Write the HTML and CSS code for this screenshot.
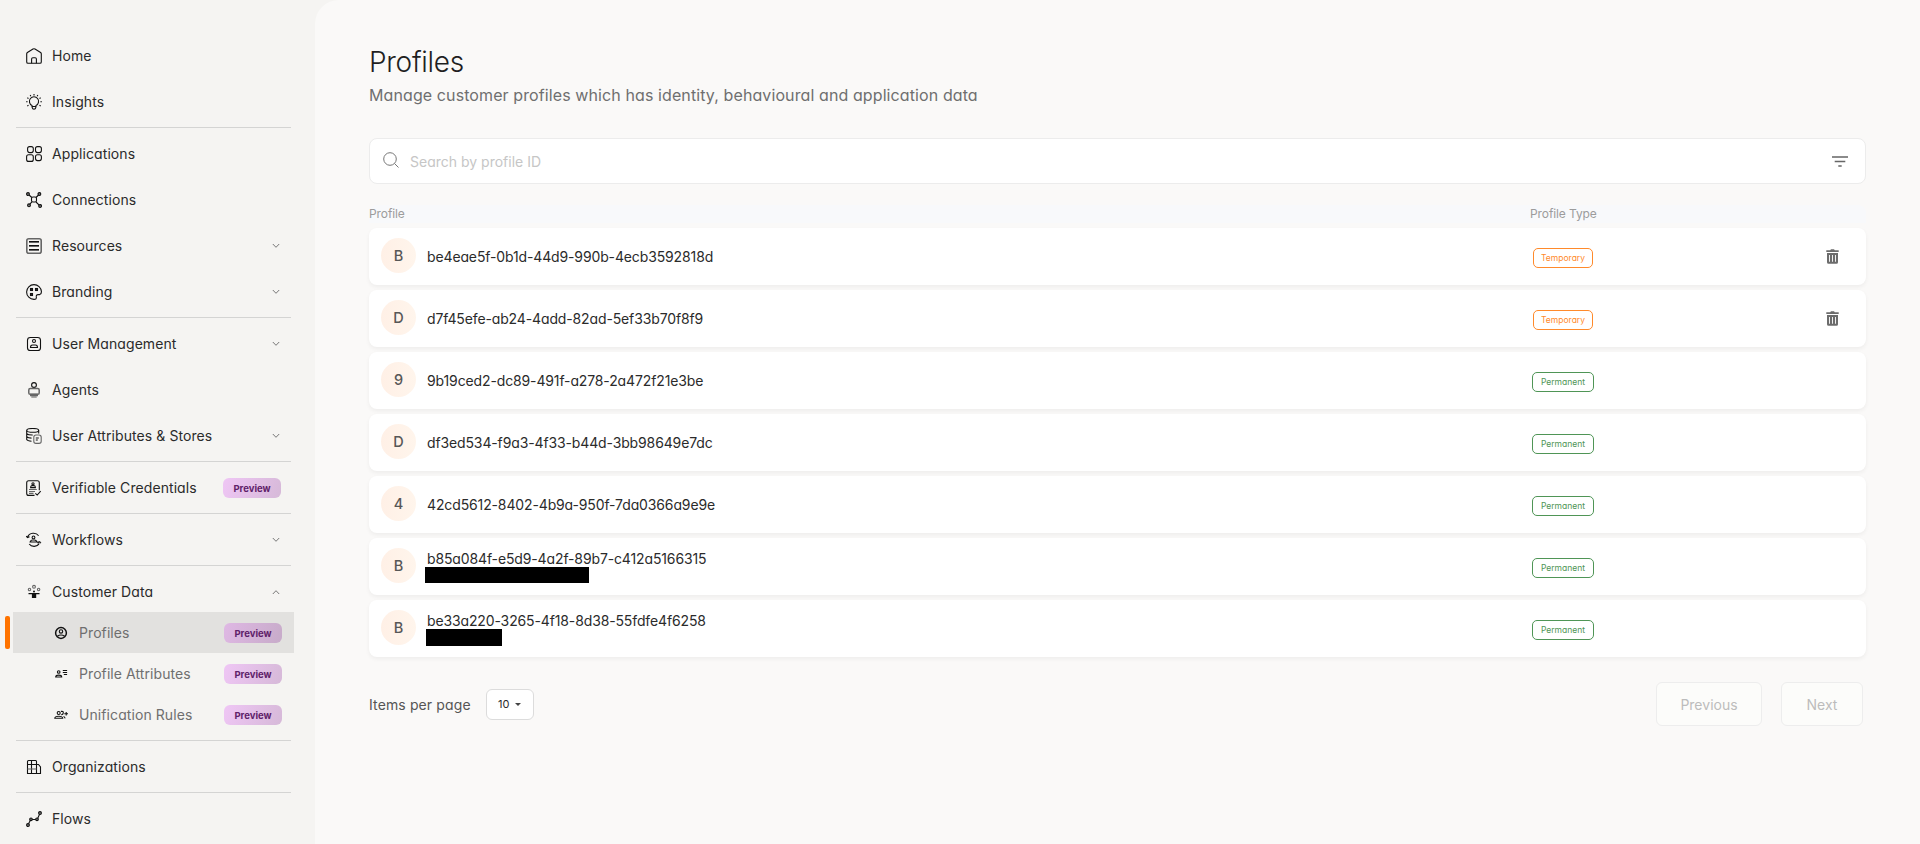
FILE: index.html
```html
<!DOCTYPE html>
<html lang="en">
<head>
    <meta charset="UTF-8">
    <meta name="viewport" content="width=device-width, initial-scale=1.0">
    <title>Profiles</title>
    <link rel="stylesheet" href="styles.css">
</head>
<body>

    <svg class="symbols" width="0" height="0">
        <symbol id="chevron" viewBox="0 0 8 6"><path d="M.8 1l3.2 3.3L7.2 1"/></symbol>
        <symbol id="trash" viewBox="0 0 13 15">
            <path d="M.3 1.2h3.9L5 .3h3l.8.9h3.9v1.9H.3z"/>
            <path fill-rule="evenodd" d="M1 4.1h11v9.1q0 1.5-1.5 1.5h-8Q1 14.7 1 13.2zM3.1 6v6.8h.9V6zm2.9 0v6.8h.9V6zm3 0v6.8h.9V6z"/>
        </symbol>
    </svg>

    <aside class="sidebar">
        <nav>
            <a class="nav-item">
                <svg class="icon" viewBox="0 0 16 16"><path d="M.7 5.8Q.7 5 1.4 4.5L7 1q1-.6 2 0l5.6 3.5q.7.5.7 1.3v8.2q0 1.3-1.3 1.3H2Q.7 15.3.7 14z"/><path d="M5.600 15.300v-4.200q0-1.400 1.300-1.400h2.200q1.300 0 1.300 1.400v4.200"/></svg>
                <span>Home</span>
            </a>
            <a class="nav-item">
                <svg class="icon" viewBox="0 0 16 16"><path d="M6 12.500v-1A4.600 4.600 0 1 1 10 11.500v1zM6.200 12.700v1q.3 1.500 1.800 1.500t1.800-1.500v-1"/><path d="M8 0v1.400M4.200 1l.6 1.200M11.800 1l-.6 1.200M1.300 3.700l1.200.7M14.700 3.700l-1.200.7M.1 7.800h1.500M15.900 7.800h-1.500M1.300 12l1.200-.7M14.700 12l-1.200-.7"/></svg>
                <span>Insights</span>
            </a>
            <hr>
            <a class="nav-item">
                <svg class="icon" viewBox="0 0 16 16"><rect x="1.6" y=".6" width="5.7" height="6" rx="2"/><rect x="9.5" y=".6" width="5.9" height="6" rx="2"/><rect x=".6" y="8.7" width="6.7" height="6.7" rx="2"/><rect x="9.5" y="8.7" width="5.9" height="5.9" rx="2"/></svg>
                <span>Applications</span>
            </a>
            <a class="nav-item">
                <svg class="icon" viewBox="0 0 16 16"><path d="M2.500 2.500l3.300 3M13 2.500l-3 3M3 13.200l2.900-3.300M13.700 13.700L10 10"/><rect x="5.500" y="5" width="5" height="5" rx="1.500"/><g class="dots"><circle cx="2" cy="2" r="1.400"/><circle cx="13.400" cy="2" r="1.400"/><circle cx="3" cy="13.300" r="1.400"/><circle cx="14.100" cy="14" r="1.400"/></g></svg>
                <span>Connections</span>
            </a>
            <a class="nav-item">
                <svg class="icon" viewBox="0 0 16 16"><rect class="soft" x=".8" y=".8" width="14.4" height="14.4" rx="2" stroke-width="1.6"/><path class="soft" stroke-width="1" d="M3 4.500h10M3 8.500h10M3 12.500h10"/><path stroke-width="1" d="M3 3.500h10M3 7.500h10M3 11.500h10"/></svg>
                <span>Resources</span>
                <svg class="chevron"><use href="#chevron"/></svg>
            </a>
            <a class="nav-item">
                <svg class="icon" viewBox="0 0 16 16"><path d="M15.400 7.400C15 3.500 12 .6 8 .6a7.400 7.400 0 1 0 0 14.800q2.800 0 2.300-2.500-.2-2.300 1.800-2.300h1.600q1.900-.6 1.700-3.200z"/><rect x="4.500" y="4.500" width="2" height="2"/><rect x="9.500" y="4.500" width="2" height="2"/><rect x="4.500" y="9.500" width="2" height="2"/></svg>
                <span>Branding</span>
                <svg class="chevron"><use href="#chevron"/></svg>
            </a>
            <hr>
            <a class="nav-item">
                <svg class="icon" viewBox="0 0 16 16"><rect x="1.500" y="1.500" width="13" height="13" rx="2.800"/><circle cx="8" cy="5" r="1.500"/><path d="M4.500 11.500q0-2.500 2-2.500h3q2 0 2 2.500z"/></svg>
                <span>User Management</span>
                <svg class="chevron"><use href="#chevron"/></svg>
            </a>
            <a class="nav-item">
                <svg class="icon" viewBox="0 0 16 16"><circle cx="8" cy="3" r="2.400"/><rect class="soft" x="2.800" y="6.600" width="10.400" height="5.700" rx="1.400" stroke-width="1.500"/><path class="soft" stroke-width="2.500" d="M4 13h8"/><path class="soft" d="M5.300 15h5.400"/></svg>
                <span>Agents</span>
            </a>
            <a class="nav-item">
                <svg class="icon" viewBox="0 0 16 16"><ellipse cx="6.700" cy="2.400" rx="6" ry="1.900"/><path d="M.7 2.400v9.200q.8 1.500 4.800 1.600M12.700 2.400v3M.7 5.600q1.500 1.500 6 1.400M.7 8.700q1.500 1.400 4.800 1.400"/><rect class="soft" x="7.800" y="7" width="7.400" height="8.400" rx="2.200"/><path d="M9.800 10h3M9.800 12h2"/></svg>
                <span>User Attributes &amp; Stores</span>
                <svg class="chevron"><use href="#chevron"/></svg>
            </a>
            <hr>
            <a class="nav-item">
                <svg class="icon" viewBox="0 0 16 16"><path d="M8.500 15.400H2.700q-2 0-2-2V2.700q0-2 2-2h8.600q2 0 2 2v7.500"/><circle cx="7" cy="3.800" r="1.100"/><path d="M4.600 7.600q0-2 1.300-2h2.200q1.300 0 1.300 2zM9.300 13.300l1.900 1.700 3.500-3.900"/><path class="soft" d="M3 9.500h7.800M3 11.500h6M3 13.400h4.500"/></svg>
                <span>Verifiable Credentials</span>
                <em class="badge">Preview</em>
            </a>
            <hr>
            <a class="nav-item">
                <svg class="icon" viewBox="0 0 16 16"><circle cx="7.500" cy="5.400" r="1.400"/><path d="M4.500 10q0-2 2-2h2q2 0 2.300 2zM1.400 5.200C3.500.3 10 0 12.600 3.700M3.200 12c2.200 3.200 8 3.200 10-.4M.2 4.100l1.300 1.500 2-.9M15 11.200l-1.700-1.400-1.800 1.200M3.500 10h11"/></svg>
                <span>Workflows</span>
                <svg class="chevron"><use href="#chevron"/></svg>
            </a>
            <hr>
            <a class="nav-item open">
                <svg class="icon" viewBox="0 0 16 16"><g class="soft"><circle cx="8" cy="2.800" r="1.400"/><circle cx="3.500" cy="5.500" r="1.200"/><circle cx="12.600" cy="5.500" r="1.200"/></g><circle class="solid" cx="8" cy="7.500" r="1"/><path class="solid" d="M2.500 9h11v1.300h-3.300v3.600H5.900v-3.600H2.500z"/></svg>
                <span>Customer Data</span>
                <svg class="chevron up"><use href="#chevron"/></svg>
            </a>
            <div class="submenu">
                <a class="sub-item active">
                    <svg class="icon" viewBox="0 0 16 16"><circle stroke-width="1.500" cx="8" cy="8" r="5.400"/><circle cx="8" cy="6.400" r="1.700"/><path d="M4.300 11.300q3.700-2.500 7.400 0"/></svg>
                    <span>Profiles</span>
                    <em class="badge">Preview</em>
                </a>
                <a class="sub-item">
                    <svg class="icon" viewBox="0 0 16 16"><circle cx="5.700" cy="6" r="1.300"/><path d="M2.700 11q0-1.900 3-1.900t3 1.900z"/><path d="M9.800 4.500h4.300M9.800 6.500h4.300M10.800 8.500h3.300"/></svg>
                    <span>Profile Attributes</span>
                    <em class="badge">Preview</em>
                </a>
                <a class="sub-item">
                    <svg class="icon" viewBox="0 0 16 16"><circle cx="5.700" cy="6" r="1.500"/><path d="M1.800 11.300q0-2 3.900-2t4 2zM8 4.400q2.500-.4 2.300 1.500T8.200 7.700M10.500 9.500q1.700.5 1.400 1.900M11.300 6.700h3.700M13.200 4.900v3.700"/></svg>
                    <span>Unification Rules</span>
                    <em class="badge">Preview</em>
                </a>
            </div>
            <hr>
            <a class="nav-item">
                <svg class="icon" viewBox="0 0 16 16"><path d="M1.500 14.500v-12q0-1 1-1h7.200q.8 0 .8 1v12zM10.500 5.500h2l2 2.500v6.500h-4M1.500 5.500h9M5.500 1.500v13"/><path class="soft" d="M1.500 10h9"/></svg>
                <span>Organizations</span>
            </a>
            <hr>
            <a class="nav-item">
                <svg class="icon" viewBox="0 0 16 16"><path d="M2 13.700l2.800-5.200h6.400L14 2.200"/><g class="dots"><circle cx="2" cy="14" r="1.400"/><circle cx="5" cy="8.300" r="1.300"/><circle cx="11" cy="8.300" r="1.300"/><circle cx="14" cy="2" r="1.400"/></g></svg>
                <span>Flows</span>
            </a>
        </nav>
    </aside>

    <main>
        <h1>Profiles</h1>
        <p class="subtitle">Manage customer profiles which has identity, behavioural and application data</p>

        <div class="search">
            <svg class="search-icon" viewBox="0 0 16 16"><circle cx="7" cy="7" r="6.300"/><path d="M11.500 11.500l4 4"/></svg>
            <span class="placeholder">Search by profile ID</span>
            <svg class="filter-icon" viewBox="0 0 16 11"><path d="M0 1h16M2.700 5.500h10.600M6.300 10h3.400"/></svg>
        </div>

        <div class="table-head">
            <span>Profile</span>
            <span>Profile Type</span>
        </div>

        <div class="rows">
            <div class="row">
                <div class="avatar">B</div>
                <div class="profile"><span>be4eae5f-0b1d-44d9-990b-4ecb3592818d</span></div>
                <div class="type"><span class="chip temporary">Temporary</span></div>
                <svg class="trash"><use href="#trash"/></svg>
            </div>
            <div class="row">
                <div class="avatar">D</div>
                <div class="profile"><span>d7f45efe-ab24-4add-82ad-5ef33b70f8f9</span></div>
                <div class="type"><span class="chip temporary">Temporary</span></div>
                <svg class="trash"><use href="#trash"/></svg>
            </div>
            <div class="row">
                <div class="avatar">9</div>
                <div class="profile"><span>9b19ced2-dc89-491f-a278-2a472f21e3be</span></div>
                <div class="type"><span class="chip permanent">Permanent</span></div>
            </div>
            <div class="row">
                <div class="avatar">D</div>
                <div class="profile"><span>df3ed534-f9a3-4f33-b44d-3bb98649e7dc</span></div>
                <div class="type"><span class="chip permanent">Permanent</span></div>
            </div>
            <div class="row">
                <div class="avatar">4</div>
                <div class="profile"><span>42cd5612-8402-4b9a-950f-7da0366a9e9e</span></div>
                <div class="type"><span class="chip permanent">Permanent</span></div>
            </div>
            <div class="row">
                <div class="avatar">B</div>
                <div class="profile"><span>b85a084f-e5d9-4a2f-89b7-c412a5166315</span><i class="redacted long"></i></div>
                <div class="type"><span class="chip permanent">Permanent</span></div>
            </div>
            <div class="row">
                <div class="avatar">B</div>
                <div class="profile"><span>be33a220-3265-4f18-8d38-55fdfe4f6258</span><i class="redacted short"></i></div>
                <div class="type"><span class="chip permanent">Permanent</span></div>
            </div>
        </div>

        <div class="pagination">
            <span class="per-page">Items per page</span>
            <div class="select">10 <i class="caret"></i></div>
            <button class="previous" disabled>Previous</button>
            <button class="next" disabled>Next</button>
        </div>
    </main>

</body>
</html>
```
FILE: styles.css
```css
:root {
    --sidebar: #f5f4f2;
    --background: #faf9f8;
    --text: #2b2b2b;
    --muted: #6f6f6f;
    --orange: #ff7300;
    --green: #4f9556;
}

* {
    box-sizing: border-box;
}

body {
    margin: 0;
    height: 844px;
    overflow: hidden;
    display: flex;
    background: var(--sidebar);
    color: var(--text);
    font-family: Inter, "Liberation Sans", sans-serif;
    font-size: 14px;
    font-feature-settings: "cv11";
}

.symbols {
    position: absolute;
}

/* Sidebar */
.sidebar {
    width: 315px;
    flex: none;
    padding-top: 33px;
}

.nav-item, .sub-item {
    display: flex;
    align-items: center;
    height: 46px;
    padding: 0 34px 0 26px;
    white-space: nowrap;
    letter-spacing: 0.08px;
}

.nav-item span {
    margin-left: 10px;
    padding-bottom: 1px;
}

.nav-item.open {
    margin-bottom: -3px;
}

.sidebar hr {
    height: 1px;
    margin: 2px 24px 3px 16px;
    border: 0;
    background: #d4d4d3;
}

.icon {
    width: 16px;
    height: 16px;
    flex: none;
    fill: none;
    stroke: #111;
    stroke-width: 1.1;
}

.icon .soft {
    stroke: #666;
}

.icon .dots {
    fill: #888;
}

.icon .solid {
    fill: #111;
    stroke: none;
}

.chevron {
    width: 8px;
    height: 6px;
    margin-left: auto;
    margin-right: 1px;
    fill: none;
    stroke: #777;
}

.chevron.up {
    transform: rotate(180deg);
}

.badge {
    width: 58px;
    height: 20px;
    margin-left: auto;
    border-radius: 6px;
    background: linear-gradient(110deg, #efc6f5, #d6b9d8);
    color: #5f2169;
    font-size: 9.5px;
    font-style: normal;
    font-weight: 700;
    letter-spacing: 0;
    line-height: 21px;
    text-align: center;
}

.submenu {
    padding-bottom: 3px;
}

.sub-item {
    position: relative;
    height: 41px;
    margin: 0 21px 0 13px;
    padding: 0 12px 0 40px;
    color: var(--muted);
}

.sub-item span {
    margin-left: 10px;
}

.sub-item.active {
    background: #e2e1df;
}

.sub-item.active .badge {
    background: linear-gradient(110deg, #dfb8e4, #c7abc9);
}

.sub-item.active::before {
    content: '';
    position: absolute;
    left: -8px;
    top: 4px;
    width: 5px;
    height: 33px;
    border-radius: 2px;
    background: var(--orange);
}

/* Content */
main {
    flex: 1;
    padding: 45px 54px 0;
    border-top-left-radius: 24px;
    background: var(--background);
}

h1 {
    margin: 0;
    padding-top: 1px;
    font-size: 28px;
    font-weight: 350;
    line-height: 33px;
    letter-spacing: -0.3px;
    color: #1f1f1f;
}

.subtitle {
    margin: 6px 0 0;
    font-size: 16px;
    line-height: 20px;
    letter-spacing: 0.1px;
    color: var(--muted);
}

.search {
    display: flex;
    align-items: center;
    height: 46px;
    margin-top: 33px;
    padding: 0 17px 0 13px;
    border: 1px solid #ececec;
    border-radius: 8px;
    background: #fff;
}

.search-icon {
    width: 16px;
    height: 16px;
    margin-bottom: 2px;
    fill: none;
    stroke: #777;
}

.placeholder {
    margin: 0 0 0 11px;
    color: #c6c6c6;
}

.filter-icon {
    width: 16px;
    height: 11px;
    margin-left: auto;
    stroke: #666;
    stroke-width: 1.5;
}

.table-head {
    display: grid;
    grid-template-columns: 1161px 1fr;
    height: 18px;
    margin-top: 21px;
    border-radius: 8px 8px 0 0;
    background: #f8f9fb;
    color: #9c9c9c;
    font-size: 12px;
    letter-spacing: -0.1px;
    line-height: 18px;
}

.rows {
    display: grid;
    gap: 5px;
    margin-top: 5px;
}

.row {
    display: grid;
    grid-template-columns: 35px 1104px 280px 1fr;
    align-items: center;
    height: 57px;
    padding-left: 12px;
    border-radius: 8px;
    background: #fff;
    box-shadow: 0 2px 4px rgba(0, 0, 0, 0.05);
}

.avatar {
    width: 35px;
    height: 35px;
    margin-bottom: 2px;
    border-radius: 50%;
    background: linear-gradient(90deg, #fff0e6, #fff5ec);
    color: #575757;
    font-size: 14.5px;
    font-weight: 500;
    line-height: 35px;
    text-align: center;
}

.profile {
    display: flex;
    flex-direction: column;
    align-items: flex-start;
    padding-left: 11px;
    line-height: 17px;
    letter-spacing: -0.13px;
}

.redacted {
    background: #000;
}

.redacted.long {
    width: 164px;
    height: 16px;
    margin-left: -2px;
}

.redacted.short {
    width: 76px;
    height: 17px;
    margin-left: -1px;
}

.type {
    display: flex;
    justify-content: center;
    width: 62px;
    margin: 3px 0 0 12px;
}

.chip {
    height: 20px;
    border: 1px solid;
    border-radius: 5px;
    font-size: 8.5px;
    line-height: 19px;
    text-align: center;
}

.temporary {
    width: 60px;
    color: #ff8a2b;
}

.permanent {
    width: 62px;
    color: var(--green);
}

.trash {
    width: 13px;
    height: 15px;
    margin-left: 26px;
    fill: #6c6c6c;
}

.pagination {
    display: flex;
    align-items: center;
    height: 44px;
    margin-top: 25px;
    padding-right: 3px;
}

.per-page {
    width: 117px;
    letter-spacing: 0.12px;
    color: #555;
}

.select {
    display: flex;
    align-items: center;
    width: 48px;
    height: 31px;
    padding-left: 11px;
    border: 1px solid #dcdcdc;
    border-radius: 6px;
    background: #fff;
    font-size: 11px;
}

.caret {
    margin-left: 6px;
    border: 3.5px solid transparent;
    border-top-color: #444;
    border-bottom: 0;
}

button {
    height: 44px;
    padding: 0;
    border: 1px solid #ededed;
    border-radius: 6px;
    background: #fcfcfa;
    color: #bcbcbc;
    font: inherit;
    font-feature-settings: inherit;
}

.previous {
    width: 106px;
    margin-left: auto;
}

.next {
    width: 82px;
    margin-left: 19px;
}
```
